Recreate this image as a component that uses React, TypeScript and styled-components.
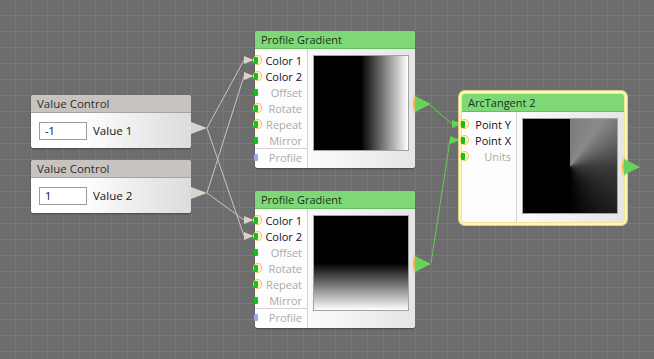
import React from 'react'
import styled, { createGlobalStyle, css } from 'styled-components'

const GlobalStyle = createGlobalStyle`
  html, body {
    margin: 0;
    padding: 0;
    background: #6d6d6d;
    overflow: hidden;
  }
  * {
    box-sizing: border-box;
  }
`

const Canvas = styled.div`
  position: relative;
  width: 654px;
  height: 359px;
  overflow: hidden;
  font-family: "Open Sans", "Noto Sans", sans-serif;
  font-size: 11px;
  background-color: #6d6d6d;
  background-image:
    linear-gradient(to right, #787878 1px, transparent 1px),
    linear-gradient(to bottom, #787878 1px, transparent 1px);
  background-size: 16px 16px;
  background-position: 15px 15px;
`

const Wires = styled.svg`
  position: absolute;
  left: 0;
  top: 0;
  width: 654px;
  height: 359px;
  pointer-events: none;
`

interface NodeBoxProps {
  $x: number
  $y: number
  $w: number
  $h: number
  $selected?: boolean
}

// nodes sit on a free canvas, so their place is the content itself
const NodeBox = styled.div<NodeBoxProps>`
  position: absolute;
  left: ${p => p.$x}px;
  top: ${p => p.$y}px;
  width: ${p => p.$w}px;
  height: ${p => p.$h}px;
  display: flex;
  flex-direction: column;
  border-radius: 3px;
  background: #fdfdfd;
  box-shadow: 0 1px 2px rgba(0, 0, 0, 0.35);
  ${p => p.$selected && css`
    box-shadow: 0 0 0 1px #efe59a, 0 0 0 3px #fff7b0, 0 0 0 4px #d9cf86;
  `}
`

const Header = styled.div<{ $tone: 'green' | 'grey' }>`
  height: 18px;
  flex: none;
  display: flex;
  align-items: center;
  padding-left: 6px;
  border-radius: 3px 3px 0 0;
  white-space: nowrap;
  ${p => p.$tone === 'green'
    ? css`
      background: #7fd878;
      color: #173417;
      border-bottom: 1px solid #66bd60;
    `
    : css`
      font-size: 11.5px;
      background: #c8c3be;
      color: #2e2e2e;
      border-bottom: 1px solid #a8a39e;
    `}
`

const ValueBody = styled.div`
  flex: 1;
  display: flex;
  align-items: center;
  gap: 6px;
  padding-left: 8px;
  border-radius: 0 0 3px 3px;
  background: linear-gradient(to right, #ffffff 30%, #dcdcdc 100%);
`

const ValueInput = styled.input`
  width: 48px;
  height: 18px;
  padding: 0 0 0 5px;
  border: 1px solid #9c9c9c;
  background: #fff;
  font-family: "Open Sans", "Noto Sans", sans-serif;
  font-size: 11px;
  color: #111;
  outline: none;
`

const ValueLabel = styled.span`
  font-size: 11.5px;
  color: #141420;
`

const FilterBody = styled.div`
  flex: 1;
  display: flex;
  border-radius: 0 0 3px 3px;
`

const PortColumn = styled.div<{ $w: number; $pad: number }>`
  width: ${p => p.$w}px;
  flex: none;
  display: flex;
  flex-direction: column;
  padding-top: ${p => p.$pad}px;
  background: #fdfdfd;
  border-right: 1px solid #d3d3d3;
  border-bottom-left-radius: 3px;
`

const PortRow = styled.div<{ $active: boolean; $divided?: boolean }>`
  position: relative;
  height: 16px;
  display: flex;
  align-items: center;
  justify-content: flex-end;
  padding-right: 5px;
  white-space: nowrap;
  color: ${p => (p.$active ? '#10102c' : '#a9a9a9')};
  ${p => p.$divided && css`
    border-top: 1px solid #d3d3d3;
    height: 17px;
  `}
`

const PortRing = styled.span`
  position: absolute;
  left: -2px;
  top: 50%;
  width: 9px;
  height: 10px;
  margin-top: -5px;
  border-radius: 50%;
  border: 1.5px solid #f1c350;
  background: #fff8dc;
`

const PortPin = styled.span<{ $kind: 'green' | 'blue' }>`
  position: absolute;
  left: -1px;
  top: 50%;
  width: 4px;
  height: 7px;
  margin-top: -3.5px;
  border-radius: 1px;
  background: ${p => (p.$kind === 'green' ? '#12c412' : '#8eaaea')};
`

const PreviewPane = styled.div`
  flex: 1;
  padding: 6px 5px 0 5px;
  border-bottom-right-radius: 3px;
  background: linear-gradient(to right, #fbfbfb 0%, #e5e5e5 100%);
`

const Preview = styled.div<{ $kind: 'horizontal' | 'vertical' | 'arc' }>`
  width: 96px;
  height: 96px;
  border: 1px solid #a3a3a3;
  background: ${p => {
    if (p.$kind === 'horizontal') return 'linear-gradient(to right, #000 0%, #000 50%, #fff 100%)'
    if (p.$kind === 'vertical') return 'linear-gradient(to bottom, #000 0%, #000 50%, #fff 100%)'
    return 'conic-gradient(from 0deg at 50% 50%, #7c7c7c 0deg, #8a8a8a 35deg, #3c3c3c 90deg, #151515 150deg, #000 180deg, #000 360deg)'
  }};
`

const OutputStripe = styled.span<{ $y: number }>`
  position: absolute;
  right: -2px;
  top: ${p => p.$y - 11}px;
  width: 4px;
  height: 22px;
  background: linear-gradient(to bottom, rgba(255, 170, 0, 0) 0%, #ffae1a 50%, rgba(255, 170, 0, 0) 100%);
`

const OutputArrow = styled.span<{ $y: number; $tone: 'green' | 'grey' }>`
  position: absolute;
  right: -16px;
  top: ${p => p.$y - (p.$tone === 'green' ? 8 : 6)}px;
  width: 0;
  height: 0;
  border-style: solid;
  ${p => p.$tone === 'green'
    ? css`
      border-width: 8px 0 8px 16px;
      border-color: transparent transparent transparent #68d35c;
    `
    : css`
      border-width: 6px 0 6px 16px;
      border-color: transparent transparent transparent #d6d2cc;
    `}
`

interface Port {
  name: string
  active: boolean
  ring: boolean
  kind?: 'green' | 'blue'
  divided?: boolean
}

const gradientPorts: Port[] = [
  { name: 'Color 1', active: true, ring: true },
  { name: 'Color 2', active: true, ring: true },
  { name: 'Offset', active: false, ring: false },
  { name: 'Rotate', active: false, ring: true },
  { name: 'Repeat', active: false, ring: true },
  { name: 'Mirror', active: false, ring: false },
  { name: 'Profile', active: false, ring: false, kind: 'blue', divided: true }
]

const arcPorts: Port[] = [
  { name: 'Point Y', active: true, ring: true },
  { name: 'Point X', active: true, ring: true },
  { name: 'Units', active: false, ring: true }
]

const PortList = ({ ports, width, pad }: { ports: Port[], width: number, pad: number }): JSX.Element => (
  <PortColumn $w={width} $pad={pad}>
    {ports.map(port => (
      <PortRow key={port.name} $active={port.active} $divided={port.divided}>
        {port.ring && <PortRing />}
        <PortPin $kind={port.kind ?? 'green'} />
        {port.name}
      </PortRow>
    ))}
  </PortColumn>
)

interface ValueNodeProps {
  x: number
  y: number
  value: string
  label: string
}

const ValueNode = ({ x, y, value, label }: ValueNodeProps): JSX.Element => (
  <NodeBox $x={x} $y={y} $w={160} $h={53}>
    <Header $tone="grey">Value Control</Header>
    <ValueBody>
      <ValueInput readOnly value={value} />
      <ValueLabel>{label}</ValueLabel>
    </ValueBody>
    <OutputArrow $tone="grey" $y={33} />
  </NodeBox>
)

interface FilterNodeProps {
  x: number
  y: number
  w: number
  h: number
  title: string
  ports: Port[]
  portWidth: number
  portPad: number
  preview: 'horizontal' | 'vertical' | 'arc'
  selected?: boolean
}

const FilterNode = ({ x, y, w, h, title, ports, portWidth, portPad, preview, selected }: FilterNodeProps): JSX.Element => (
  <NodeBox $x={x} $y={y} $w={w} $h={h} $selected={selected}>
    <Header $tone="green">{title}</Header>
    <FilterBody>
      <PortList ports={ports} width={portWidth} pad={portPad} />
      <PreviewPane>
        <Preview $kind={preview} />
      </PreviewPane>
    </FilterBody>
    <OutputStripe $y={73} />
    <OutputArrow $tone="green" $y={73} />
  </NodeBox>
)

interface Wire {
  from: [number, number]
  to: [number, number]
}

const greyWires: Wire[] = [
  { from: [207, 128], to: [244, 60] },
  { from: [207, 193], to: [244, 76] },
  { from: [207, 193], to: [244, 220] },
  { from: [207, 128], to: [244, 236] }
]

const greenWires: Wire[] = [
  { from: [430, 105], to: [452, 124] },
  { from: [431, 263], to: [450, 140] }
]

const arrowHead = ([x, y]: [number, number]): string => `${x},${y - 4} ${x + 10},${y} ${x},${y + 4}`

const App = (): JSX.Element => {
  return (
    <>
      <GlobalStyle />
      <Canvas>
        <Wires viewBox="0 0 654 359">
          {greyWires.map((w, i) => (
            <g key={`g${i}`}>
              <line x1={w.from[0]} y1={w.from[1]} x2={w.to[0]} y2={w.to[1]} stroke="#c9c5c1" strokeWidth={1} />
              <polygon points={arrowHead(w.to)} fill="#d6d2cc" />
            </g>
          ))}
          {greenWires.map((w, i) => (
            <g key={`n${i}`}>
              <line x1={w.from[0]} y1={w.from[1]} x2={w.to[0]} y2={w.to[1]} stroke="#5fd04f" strokeWidth={1} />
              <polygon points={arrowHead(w.to)} fill="#62d453" />
            </g>
          ))}
        </Wires>

        <ValueNode x={31} y={95} value="-1" label="Value 1" />
        <ValueNode x={31} y={160} value="1" label="Value 2" />

        <FilterNode x={255} y={31} w={160} h={137} title="Profile Gradient"
          ports={gradientPorts} portWidth={53} portPad={3} preview="horizontal" />
        <FilterNode x={255} y={191} w={160} h={137} title="Profile Gradient"
          ports={gradientPorts} portWidth={53} portPad={3} preview="vertical" />

        <FilterNode x={462} y={94} w={162} h={128} title="ArcTangent 2"
          ports={arcPorts} portWidth={55} portPad={4} preview="arc" selected />
      </Canvas>
    </>
  )
}

export default App
